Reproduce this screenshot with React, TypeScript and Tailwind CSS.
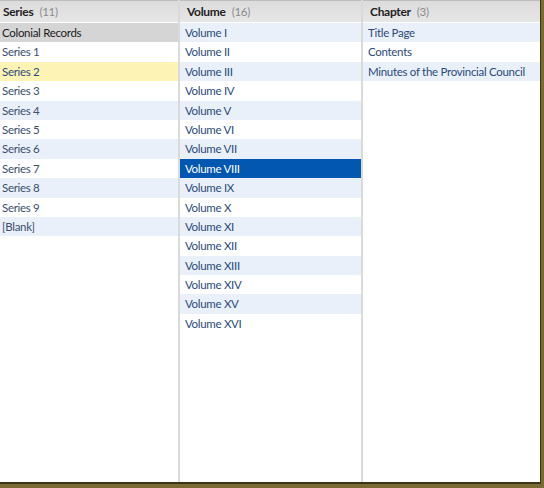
import React from "react"

type Col = {
    title: string
    count: number
    items: string[]
    width: string
    pad: string
    headPad: string
    special?: (i: number) => string | null
}

const series = ["Colonial Records", "Series 1", "Series 2", "Series 3", "Series 4", "Series 5", "Series 6", "Series 7", "Series 8", "Series 9", "[Blank]"]
const volumes = ["I", "II", "III", "IV", "V", "VI", "VII", "VIII", "IX", "X", "XI", "XII", "XIII", "XIV", "XV", "XVI"].map(v => "Volume " + v)
const chapters = ["Title Page", "Contents", "Minutes of the Provincial Council"]

const rowClass = (i: number, special: string | null) => {
    if (special) return special
    return i % 2 === 0 ? "bg-[#e9f0f9] text-[#2c4a7c]" : "bg-white text-[#2c4a7c]"
}

const Column = ({ title, count, items, width, pad, headPad, special }: Col) => (
    <div className={"flex flex-col h-full shrink-0 overflow-hidden " + width}>
        <div className={"h-[23px] flex items-center gap-[6px] bg-gradient-to-b from-[#dcdcdc] to-[#e6e6e6] border-t border-[#bdbdbd] border-b border-b-white " + headPad}>
            <span className="font-bold text-[#222] text-[12px]">{title}</span>
            <span className="text-[#8a8a8a]">({count})</span>
        </div>
        <div className="flex flex-col">
            {items.map((item, i) => (
                <div key={item} className={"h-[19.4px] leading-[19.4px] whitespace-nowrap " + pad + " " + rowClass(i, special ? special(i) : null)}>
                    {item}
                </div>
            ))}
        </div>
    </div>
)

const App = () => {
    return (
        <div className="w-[544px] h-[488px] bg-[#7a6a34] overflow-hidden" style={{ fontFamily: 'Lato, "Noto Sans", sans-serif' }}>
            <div className="w-[541px] h-[484px] bg-[#3b3418]">
                <div className="w-[540px] h-[482px] bg-white flex text-[11.5px] tracking-[-0.3px]">
                    <Column title="Series" count={11} items={series} width="w-[178px]" pad="px-[2px]" headPad="px-[3px]"
                        special={i => i === 0 ? "bg-[#d5d5d5] text-[#1a1a1a]" : i === 2 ? "bg-[#fcf3b5] text-[#2c4a7c]" : i % 2 === 0 ? "bg-[#e9f0f9] text-[#3a4e70]" : "bg-white text-[#3a4e70]"} />
                    <div className="w-[2px] h-full shrink-0 bg-[#dadada]" />
                    <Column title="Volume" count={16} items={volumes} width="w-[181px]" pad="px-[5px]" headPad="px-[7px]"
                        special={i => i === 7 ? "bg-[#0257b0] text-white" : null} />
                    <div className="w-[2px] h-full shrink-0 bg-[#dadada]" />
                    <Column title="Chapter" count={3} items={chapters} width="flex-1" pad="px-[5px]" headPad="px-[7px]" />
                </div>
            </div>
        </div>
    )
}

export default App
